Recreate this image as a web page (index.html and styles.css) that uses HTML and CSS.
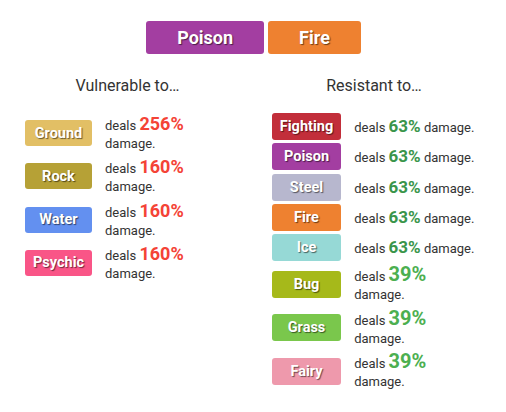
FILE: index.html
```html
<!DOCTYPE html>
<html>
<head>
<meta charset="utf-8">
<link rel="stylesheet" href="styles.css">
</head>
<body>
<div class="page">
  <div class="header">
    <span class="type big poison">Poison</span>
    <span class="type big fire">Fire</span>
  </div>
  <div class="cols">
    <section class="col col-left">
      <h2 class="heading">Vulnerable to…</h2>
      <div class="list">
        <span class="type ground">Ground</span>
        <p class="dmg">deals <b class="num weak x256">256%</b> damage.</p>
        <span class="type rock">Rock</span>
        <p class="dmg">deals <b class="num weak x160">160%</b> damage.</p>
        <span class="type water">Water</span>
        <p class="dmg">deals <b class="num weak x160">160%</b> damage.</p>
        <span class="type psychic">Psychic</span>
        <p class="dmg">deals <b class="num weak x160">160%</b> damage.</p>
      </div>
    </section>
    <section class="col col-right">
      <h2 class="heading">Resistant to…</h2>
      <div class="list">
        <span class="type fighting">Fighting</span>
        <p class="dmg">deals <b class="num res x63">63%</b> damage.</p>
        <span class="type poison">Poison</span>
        <p class="dmg">deals <b class="num res x63">63%</b> damage.</p>
        <span class="type steel">Steel</span>
        <p class="dmg">deals <b class="num res x63">63%</b> damage.</p>
        <span class="type fire">Fire</span>
        <p class="dmg">deals <b class="num res x63">63%</b> damage.</p>
        <span class="type ice">Ice</span>
        <p class="dmg">deals <b class="num res x63">63%</b> damage.</p>
        <span class="type bug">Bug</span>
        <p class="dmg">deals <b class="num res2 x39">39%</b> damage.</p>
        <span class="type grass">Grass</span>
        <p class="dmg">deals <b class="num res2 x39">39%</b> damage.</p>
        <span class="type fairy">Fairy</span>
        <p class="dmg">deals <b class="num res2 x39">39%</b> damage.</p>
      </div>
    </section>
  </div>
</div>
</body>
</html>
```
FILE: styles.css
```css
* { box-sizing: border-box; }
body {
  margin: 0;
  background: #fff;
  font-family: Roboto, "Liberation Sans", sans-serif;
  color: #333;
}
.page {
  width: 506px;
  padding-top: 21px;
}
.header {
  display: flex;
  justify-content: center;
  gap: 4px;
  padding-left: 1px;
}
.type {
  display: flex;
  align-items: center;
  justify-content: center;
  color: #fff;
  font-weight: 700;
  font-size: 14.5px;
  height: 26px;
  padding: 0 8px;
  border-radius: 3px;
  text-shadow: 1px 1px 1px rgba(0,0,0,0.55);
}
.type.big {
  font-size: 18px;
  height: 33px;
  padding: 0 31px;
}
.cols {
  display: grid;
  grid-template-columns: 252px 244px;
  margin-top: 22px;
}
.heading {
  margin: 0;
  text-align: center;
  font-size: 16px;
  font-weight: 400;
  line-height: 19px;
  color: #333;
}
.col-left .heading { padding-left: 3px; }
.list {
  display: grid;
  grid-template-columns: auto 122px;
  justify-content: center;
  align-items: center;
  column-gap: 13px;
  row-gap: 3.3px;
  margin-top: 18px;
}
.col-right .type { height: 27px; }
.dmg {
  margin: 0;
  font-size: 13px;
  line-height: 18px;
  color: #333;
}
.num { font-weight: 700; line-height: 21px; }
.weak { color: #f44336; }
.res { color: #3a954b; }
.res2 { color: #4caf50; }
.x256 { font-size: 18px; }
.x160 { font-size: 18px; }
.x63 { font-size: 17px; }
.x39 { font-size: 20px; }

.poison { background: #a33ea1; }
.fire { background: #ee8130; }
.ground { background: #e2bf65; }
.rock { background: #b6a136; }
.water { background: #6390f0; }
.psychic { background: #f95587; }
.fighting { background: #c22e3a; }
.steel { background: #b7b7ce; }
.ice { background: #96d9d6; }
.bug { background: #a6b91a; }
.grass { background: #7ac74c; }
.fairy { background: #ee99ac; }
```
